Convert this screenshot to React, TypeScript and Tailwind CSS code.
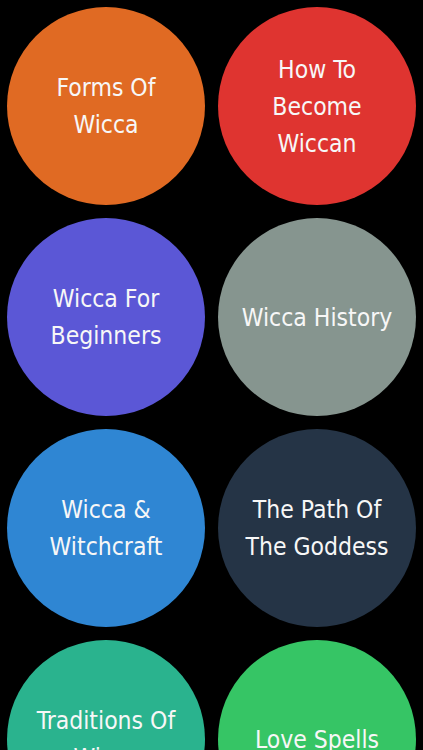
const topics = [
  { label: ["Forms Of", "Wicca"], color: "bg-[#e06a23]" },
  { label: ["How To", "Become", "Wiccan"], color: "bg-[#df3430]" },
  { label: ["Wicca For", "Beginners"], color: "bg-[#5b57d6]" },
  { label: ["Wicca History"], color: "bg-[#86958f]" },
  { label: ["Wicca &", "Witchcraft"], color: "bg-[#2f86d3]" },
  { label: ["The Path Of", "The Goddess"], color: "bg-[#253446]" },
  { label: ["Traditions Of", "Wicca"], color: "bg-[#2ab38e]" },
  { label: ["Love Spells"], color: "bg-[#36c565]" },
];

export default function App() {
  return (
    <div className="h-[750px] w-full overflow-hidden bg-black">
      <div className="grid grid-cols-2 gap-[13px] p-[7px]">
        {topics.map((topic) => (
          <button
            key={topic.label.join(" ")}
            type="button"
            className={`flex h-[198px] w-[198px] flex-col items-center justify-center rounded-full ${topic.color} text-center text-[24.5px] leading-[37px] text-[#f7f7f7] [font-family:'Liberation_Sans_Narrow','DejaVu_Sans_Condensed',sans-serif]`}
          >
            {topic.label.map((line) => (
              <span key={line}>{line}</span>
            ))}
          </button>
        ))}
      </div>
    </div>
  );
}
